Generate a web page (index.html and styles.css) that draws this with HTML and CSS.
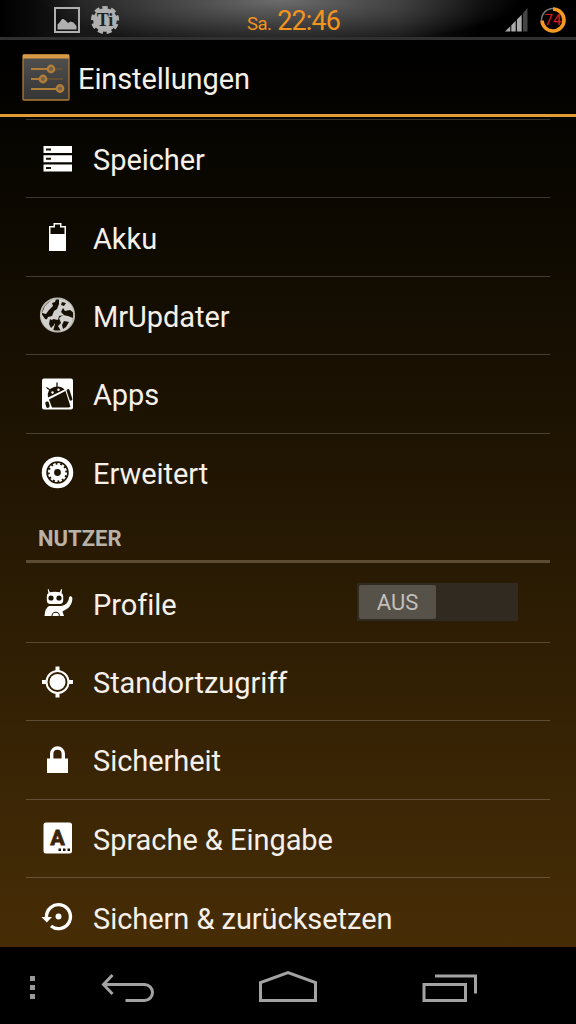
FILE: index.html
```html
<!DOCTYPE html>
<html lang="de">
<head>
    <meta charset="UTF-8">
    <title>Einstellungen</title>
    <link rel="stylesheet" href="styles.css">
</head>
<body>
    <div class="statusbar">
        <div class="notifications">
            <svg width="26" height="26" viewBox="0 0 26 26">
                <rect x="1" y="1" width="24" height="24" fill="none" stroke="#b0b0b0" stroke-width="2"/>
                <path d="M3.500 22.500V17.500l2-2 2.500-3.500h1.500l2 1.500 2.500 2.500 2.500-1.500 3 1 3 3.500v3.500z" fill="#b0b0b0"/>
            </svg>
            <svg width="30" height="30" viewBox="0 0 30 30">
                <circle cx="15" cy="15" r="11.800" fill="#b0b0b0"/>
                <circle cx="15" cy="15" r="12" fill="none" stroke="#b0b0b0" stroke-width="4.200" stroke-dasharray="5 3.378" transform="rotate(-102 15 15)"/>
                <text x="15" y="20.500" class="ti">Ti</text>
            </svg>
        </div>
        <div class="clock"><span class="day">Sa.</span> 22:46</div>
        <div class="system">
            <svg width="24" height="25" viewBox="0 0 24 25">
                <path d="M0 24.500L5.300 19.200v5.300z M6.300 24.500V18.200l4.400-4.400v10.700z M11.900 24.500V12.600l4.800-4.800v16.700z" fill="#aaa"/>
                <path d="M18 24.500V6l4.500-5v23.500z" fill="#444"/>
            </svg>
            <svg width="26" height="26" viewBox="0 0 26 26">
                <circle cx="13" cy="13" r="11.500" fill="none" stroke="#777" stroke-width="1.500"/>
                <circle cx="13" cy="13" r="11" fill="none" stroke="#f59a22" stroke-width="3.600" pathLength="100" stroke-dasharray="74 26" transform="rotate(-90 13 13)"/>
                <text x="13" y="18" class="percent">74</text>
            </svg>
        </div>
    </div>

    <div class="header">
        <svg width="48" height="48" viewBox="0 0 48 48">
            <defs>
                <linearGradient id="tile" x1="0" y1="0" x2="0" y2="1">
                    <stop offset="0" stop-color="#505050"/>
                    <stop offset="1" stop-color="#353535"/>
                </linearGradient>
            </defs>
            <rect x="1" y="2" width="46" height="45" rx="1" fill="url(#tile)" stroke="#b07c34" stroke-width="1.300"/>
            <path d="M1 1.500h46v4H1z" fill="#d99a45"/>
            <path d="M9 16h32M9 26h32M9 36h32" stroke="#6b5332" stroke-width="1.300"/>
            <path d="M9 16h20M9 26h12M9 36h29" stroke="#b07d36" stroke-width="2"/>
            <g fill="#706050" stroke="#b07d36" stroke-width="2.400">
                <circle cx="29" cy="16" r="3.200"/>
                <circle cx="21" cy="26" r="3.200"/>
                <circle cx="38" cy="35.500" r="3.200"/>
            </g>
        </svg>
        <h1>Einstellungen</h1>
    </div>

    <div class="content">
        <ul class="list first">
            <li>
                <svg class="icon" viewBox="0 0 40 40">
                    <path d="M6.500 7h28.500v7H6.500z M6.500 16.200h28.500v7H6.500z M6.500 25.500h28.500v7H6.500z"/>
                    <path class="cut" d="M9 9.600h5v1.900H9z M9 18.800h5v1.900H9z M9 28.100h5v1.900H9z"/>
                </svg>
                <span>Speicher</span>
            </li>
            <li>
                <svg class="icon" viewBox="0 0 40 40">
                    <path fill-rule="evenodd" d="M16.500 6h8v3H29v25H12V9h4.500z M18 7.500v3h-4.500V17h14v-6.500H23v-3z"/>
                </svg>
                <span>Akku</span>
            </li>
            <li>
                <svg class="icon globe" viewBox="0 0 40 40">
                    <circle cx="20.500" cy="20" r="16.600" class="ring"/>
                    <path d="M8 11q5-6 11-7l-1 3-3 1 1 3-4 4-3 4-4-1z"/>
                    <path d="M22 4q8 1 12 6l3 8-4-3-5 1-2-3-2 4 3 3-5 1-1 4-5-1-2 3-5-1 2-4 4-1 2-5 3-2 2-5z"/>
                    <path d="M4 18l4 6 5 1 5 4-2 7q-11-4-12-14z"/>
                    <path d="M22 23l4-3 5 1 5 2q-1 8-8 12l-4 1-3-5 3-3z"/>
                    <path class="sea" d="M13 24l5 3-1 3-3 3-2-4z M27 26l5 1-3 5-3 2-1-4z M29 18l5-1v1.500l-4 2z M25 7l4 1-2 3-3-1z"/>
                </svg>
                <span>MrUpdater</span>
            </li>
            <li>
                <svg class="icon" viewBox="0 0 40 40">
                    <rect x="5" y="4.500" width="31" height="31" rx="2"/>
                    <g class="cut">
                        <path d="M11 23.500Q9.500 15.500 17 13 24 11.500 27.500 15.500z"/>
                        <path d="M12 25.500L28.500 17l5 15.500-1.500 1H15z"/>
                        <rect x="8.500" y="27.500" width="3.600" height="6.500" rx="1.800" transform="rotate(-15 10 30)"/>
                        <rect x="31" y="15" width="3" height="12" rx="1.500" transform="rotate(-18 32 21)"/>
                    </g>
                    <path class="dark" d="M20 14V8.500M13 16l-3.500-2.500"/>
                    <circle cx="15.500" cy="18.500" r="1.200"/><circle cx="21.500" cy="15.700" r="1.200"/>
                </svg>
                <span>Apps</span>
            </li>
            <li>
                <svg class="icon" viewBox="0 0 40 40">
                    <circle cx="20.500" cy="19.500" r="13.500" class="ring thick"/>
                    <circle cx="20.500" cy="19.500" r="5.700" class="ring gear"/>
                    <circle cx="20.500" cy="19.500" r="8.300" class="ring teeth" pathLength="120"/>
                </svg>
                <span>Erweitert</span>
            </li>
        </ul>

        <h2>NUTZER</h2>

        <ul class="list">
            <li>
                <svg class="icon" viewBox="0 0 40 40">
                    <path d="M11.500 6l1.300 3.200q5-1 10 0L24.300 6l.8.300-.5 4q1.600.7 1.600 3v4q0 3.700-3.500 3.700h-9.400q-3.500 0-3.500-3.700v-4q0-2.300 1.600-3l-.7-4z"/>
                    <path d="M12 23h12q4-.5 6-3 2-2.500 2-5.500.5-1.500 2-1.200 1.600.5 1.400 2.700-.5 6-4.900 9.500l-5 3 1.500 4.500H7.500q.5-8 4.500-10z"/>
                    <g class="cut">
                        <circle cx="14" cy="15" r="2.600"/><circle cx="22" cy="15" r="2.600"/>
                        <path d="M14.500 33a4.200 4.200 0 0 1 8.400 0h-1a3.200 3.200 0 0 0-6.400 0z"/>
                    </g>
                </svg>
                <span>Profile</span>
                <div class="switch"><div class="thumb">AUS</div></div>
            </li>
            <li>
                <svg class="icon" viewBox="0 0 40 40">
                    <circle cx="20.500" cy="20" r="8"/>
                    <circle cx="20.500" cy="20" r="11" class="ring"/>
                    <path d="M18.500 4.500h4V9h-4z M18.500 31h4v4.500h-4z M5 18h4.500v4H5z M31.500 18H36v4h-4.500z"/>
                </svg>
                <span>Standortzugriff</span>
            </li>
            <li>
                <svg class="icon" viewBox="0 0 40 40">
                    <path d="M10 18.500h21V33H10z"/>
                    <path class="shackle" d="M14.700 19v-5.200a5.800 5.800 0 0 1 11.600 0V19"/>
                </svg>
                <span>Sicherheit</span>
            </li>
            <li>
                <svg class="icon" viewBox="0 0 40 40">
                    <rect x="6.500" y="4.500" width="28.500" height="31" rx="2.500"/>
                    <text x="20.500" y="26.500" class="letter">A</text>
                    <path class="cut" d="M21.500 30.500H24V33h-2.500z M26 30.500h2.500V33H26z M30.500 30.500H33V33h-2.500z"/>
                </svg>
                <span>Sprache &amp; Eingabe</span>
            </li>
            <li>
                <svg class="icon" viewBox="0 0 40 40">
                    <path class="arc" d="M9.500 20a12 12 0 1 1 4.500 9"/>
                    <path d="M4.500 20H15l-5.200 5.500z"/>
                    <circle cx="21.500" cy="19.500" r="3"/>
                </svg>
                <span>Sichern &amp; zurücksetzen</span>
            </li>
        </ul>
    </div>

    <div class="navbar">
        <svg width="576" height="77" viewBox="0 0 576 77">
            <path class="dots" d="M30 29h5v5h-5z M30 38h5v5h-5z M30 47h5v5h-5z"/>
            <path d="M112.500 28l-9 9.500 9 9.500M104 37.500h40.500a8 8 0 0 1 0 16H125.500"/>
            <path d="M260.500 53.500V35.500l27.500-10 27.500 10v18z"/>
            <path d="M424 37.500h41.500v16H424z M435 29h40.500v17.500"/>
        </svg>
    </div>
</body>
</html>
```

FILE: styles.css
```css
* {
    box-sizing: border-box;
}
body {
    display: flex;
    flex-direction: column;
    width: 576px;
    height: 1024px;
    margin: 0;
    overflow: hidden;
    font-family: Roboto, "Noto Sans", sans-serif;
    color: #f5f1ea;
    background: linear-gradient(#000 40px, #050400 120px, #472d06 947px);
}
svg {
    display: block;
    flex: none;
}
h1, h2, ul {
    margin: 0;
    padding: 0;
    font-weight: normal;
}

/* status bar */
.statusbar {
    display: grid;
    grid-template-columns: 193px 1fr auto;
    align-items: center;
    height: 40px;
    padding: 0 10px 0 54px;
    border-bottom: 3px solid #303030;
    background:
        radial-gradient(ellipse 240px 48px at 280px 0, rgba(125, 125, 125, .85), transparent),
        linear-gradient(90deg, #000, #181818 80px, #111 250px, #141414 400px, #000 480px);
}
.notifications, .system {
    display: flex;
    align-items: center;
    gap: 11px;
    padding-top: 2px;
}
.notifications {
    gap: 10px;
}
.clock {
    padding-top: 4px;
    color: #f3941e;
    font-size: 27px;
    letter-spacing: -.9px;
}
.day {
    font-size: 18.5px;
    letter-spacing: -.5px;
}
.ti {
    font: bold 18px "Liberation Serif", serif;
    text-anchor: middle;
    fill: #222;
}
.percent {
    font-size: 15px;
    text-anchor: middle;
    fill: #e01818;
}

/* title */
.header {
    display: flex;
    align-items: center;
    gap: 8px;
    height: 77px;
    padding: 0 22px;
    border-bottom: 3px solid #e39a35;
}
h1 {
    padding-top: 4px;
    font-size: 29px;
    letter-spacing: -.1px;
}

/* settings */
.content {
    flex: 1;
    min-height: 0;
    padding: 2px 26px 0;
    overflow: hidden;
}
.list {
    list-style: none;
}
.first {
    border-top: 1px solid #37342c;
}
.list li {
    display: flex;
    align-items: center;
    height: 78.4px;
    padding: 0 32px 0 11px;
    border-bottom: 1px solid rgba(255, 255, 255, .2);
    font-size: 29px;
    letter-spacing: -.05px;
}
.list li:last-child {
    border-bottom: 0;
}
.list span {
    flex: 1;
    margin-left: 16px;
    padding-top: 3px;
    white-space: nowrap;
}
h2 {
    height: 51px;
    padding: 14px 12px 0;
    border-bottom: 3px solid #5c4c33;
    color: #b9b2a8;
    font-size: 22px;
    font-weight: bold;
    line-height: 26px;
}
h2 + .list {
    padding-top: 1.5px;
}
.icon {
    width: 40px;
    height: 40px;
    fill: #fff;
}
.icon .cut {
    fill: #1b1303;
}
.icon .dark {
    stroke: #1b1303;
    stroke-width: 1.3;
}
.icon .ring {
    fill: none;
    stroke: #fff;
    stroke-width: 2;
}
.icon .thick {
    stroke-width: 4.5;
}
.icon .gear {
    stroke-width: 4.6;
}
.icon .teeth {
    stroke-width: 2.6;
    stroke-dasharray: 6 4;
}
.icon .shackle, .icon .arc {
    fill: none;
    stroke: #fff;
    stroke-width: 3.4;
}
.icon .letter {
    font: bold 21px Roboto, sans-serif;
    text-anchor: middle;
    fill: #3a2605;
    stroke: #3a2605;
}
.globe {
    fill: #d2d0cc;
}
.globe .ring {
    stroke: #bbb8b2;
}
.globe .sea {
    fill: #171003;
}
.switch {
    width: 161px;
    height: 38px;
    margin-top: -2px;
    padding: 2px;
    background: #302a20;
}
.thumb {
    width: 77px;
    height: 34px;
    border-radius: 2px;
    background: #56524a;
    color: #c3bfb8;
    font-size: 22px;
    letter-spacing: 0;
    line-height: 36px;
    text-align: center;
}

/* navigation */
.navbar {
    flex: none;
    height: 77px;
    background: #000;
}
.navbar path {
    fill: none;
    stroke: #a3a3a3;
    stroke-width: 3;
}
.navbar .dots {
    fill: #999;
    stroke: none;
}
```
